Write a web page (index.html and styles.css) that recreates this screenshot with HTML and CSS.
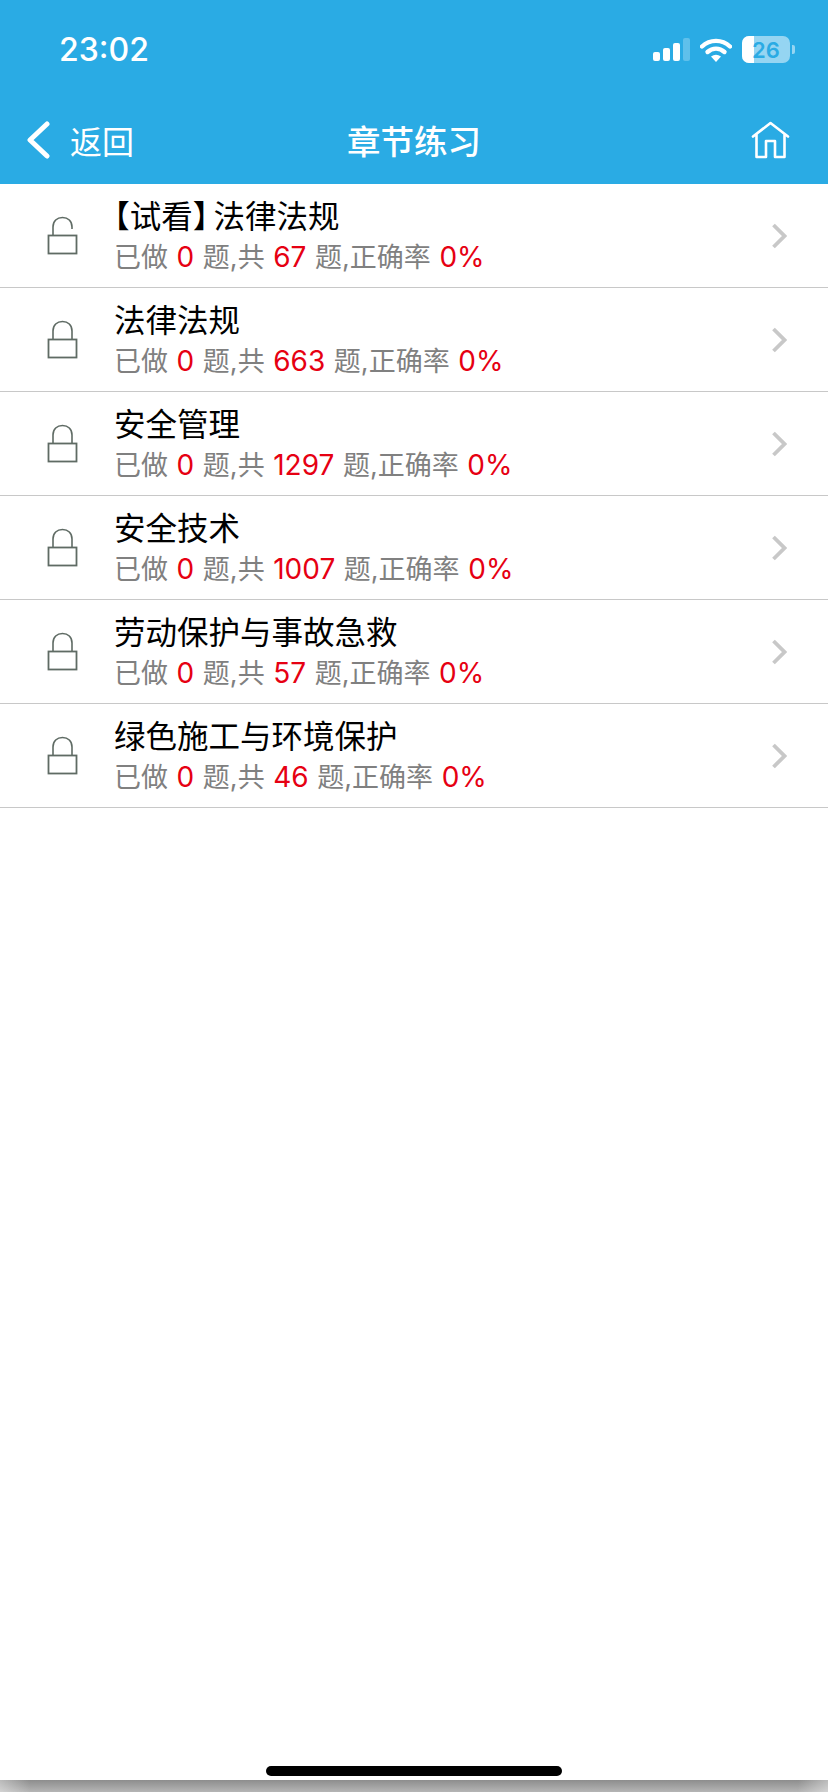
FILE: index.html
```html
<!DOCTYPE html>
<html lang="zh-CN">
<head>
<meta charset="utf-8">
<title>章节练习</title>
<link rel="stylesheet" href="styles.css">
</head>
<body>
<div class="screen">
  <header class="header">
    <div class="status">
      <span class="time">23:02</span>
      <div class="status-icons">
        <svg class="signal" width="37" height="23" viewBox="0 0 37 23"><rect x="0" y="14" width="7" height="9" rx="2" fill="#fff"/><rect x="10" y="10" width="7" height="13" rx="2" fill="#fff"/><rect x="20" y="5" width="7" height="18" rx="2" fill="#fff"/><rect x="30" y="0" width="7" height="23" rx="2" fill="#fff" opacity=".25"/></svg>
        <svg class="wifi" width="32" height="24" viewBox="0 0 32 24"><path d="M2 8.500C10 1 22 1 30 8.500" fill="none" stroke="#fff" stroke-width="4.400" stroke-linecap="round"/><path d="M7.500 14C12.500 9.500 19.500 9.500 24.500 14" fill="none" stroke="#fff" stroke-width="4.400" stroke-linecap="round"/><path d="M11 18.500Q16 15 21 18.500L16 24Z" fill="#fff"/></svg>
        <div class="battery"><div class="battery-body"><div class="battery-fill"></div><span class="battery-text">26</span></div><div class="battery-cap"></div></div>
      </div>
    </div>
    <nav class="nav">
      <div class="back">
        <svg width="24" height="38" viewBox="0 0 24 38"><path d="M21 3L4 19L21 35" fill="none" stroke="#fff" stroke-width="5" stroke-linecap="round" stroke-linejoin="round"/></svg>
        <span>返回</span>
      </div>
      <div class="title">章节练习</div>
      <svg class="home" width="40" height="38" viewBox="0 0 40 38"><path d="M2 15.500L19.500 2L37 15.500M5.500 13V36H15V20H24V36H33.500V13" fill="none" stroke="#fff" stroke-width="2.600" stroke-linecap="round" stroke-linejoin="round"/></svg>
    </nav>
  </header>
  <main class="list">
    <div class="row">
      <svg class="lock" width="32" height="40" viewBox="0 0 32 40"><path d="M6 19V11C6 5 10 1.500 15.500 1.500C21 1.500 25 5 25 11V13" fill="none" stroke="#5f6b64" stroke-width="1.600"/><rect x="1.500" y="19.500" width="28" height="18" fill="none" stroke="#5f6b64" stroke-width="1.800"/></svg>
      <div class="info">
        <div class="name"><span class="bracket">【</span>试看<span class="bracket bracket-close">】</span>法律法规</div>
        <div class="stats">已做 <em>0</em> 题,共 <em>67</em> 题,正确率 <em>0%</em></div>
      </div>
      <svg class="chev" width="16" height="26" viewBox="0 0 16 26"><path d="M2.500 2L13.500 13L2.500 24" fill="none" stroke="#c8c8c8" stroke-width="3.800"/></svg>
    </div>
    <div class="row">
      <svg class="lock" width="32" height="40" viewBox="0 0 32 40"><path d="M6 19V11C6 5 10 1.500 15.500 1.500C21 1.500 25 5 25 11V19" fill="none" stroke="#5f6b64" stroke-width="1.600"/><rect x="1.500" y="19.500" width="28" height="18" fill="none" stroke="#5f6b64" stroke-width="1.800"/></svg>
      <div class="info">
        <div class="name">法律法规</div>
        <div class="stats">已做 <em>0</em> 题,共 <em>663</em> 题,正确率 <em>0%</em></div>
      </div>
      <svg class="chev" width="16" height="26" viewBox="0 0 16 26"><path d="M2.500 2L13.500 13L2.500 24" fill="none" stroke="#c8c8c8" stroke-width="3.800"/></svg>
    </div>
    <div class="row">
      <svg class="lock" width="32" height="40" viewBox="0 0 32 40"><path d="M6 19V11C6 5 10 1.500 15.500 1.500C21 1.500 25 5 25 11V19" fill="none" stroke="#5f6b64" stroke-width="1.600"/><rect x="1.500" y="19.500" width="28" height="18" fill="none" stroke="#5f6b64" stroke-width="1.800"/></svg>
      <div class="info">
        <div class="name">安全管理</div>
        <div class="stats">已做 <em>0</em> 题,共 <em>1297</em> 题,正确率 <em>0%</em></div>
      </div>
      <svg class="chev" width="16" height="26" viewBox="0 0 16 26"><path d="M2.500 2L13.500 13L2.500 24" fill="none" stroke="#c8c8c8" stroke-width="3.800"/></svg>
    </div>
    <div class="row">
      <svg class="lock" width="32" height="40" viewBox="0 0 32 40"><path d="M6 19V11C6 5 10 1.500 15.500 1.500C21 1.500 25 5 25 11V19" fill="none" stroke="#5f6b64" stroke-width="1.600"/><rect x="1.500" y="19.500" width="28" height="18" fill="none" stroke="#5f6b64" stroke-width="1.800"/></svg>
      <div class="info">
        <div class="name">安全技术</div>
        <div class="stats">已做 <em>0</em> 题,共 <em>1007</em> 题,正确率 <em>0%</em></div>
      </div>
      <svg class="chev" width="16" height="26" viewBox="0 0 16 26"><path d="M2.500 2L13.500 13L2.500 24" fill="none" stroke="#c8c8c8" stroke-width="3.800"/></svg>
    </div>
    <div class="row">
      <svg class="lock" width="32" height="40" viewBox="0 0 32 40"><path d="M6 19V11C6 5 10 1.500 15.500 1.500C21 1.500 25 5 25 11V19" fill="none" stroke="#5f6b64" stroke-width="1.600"/><rect x="1.500" y="19.500" width="28" height="18" fill="none" stroke="#5f6b64" stroke-width="1.800"/></svg>
      <div class="info">
        <div class="name">劳动保护与事故急救</div>
        <div class="stats">已做 <em>0</em> 题,共 <em>57</em> 题,正确率 <em>0%</em></div>
      </div>
      <svg class="chev" width="16" height="26" viewBox="0 0 16 26"><path d="M2.500 2L13.500 13L2.500 24" fill="none" stroke="#c8c8c8" stroke-width="3.800"/></svg>
    </div>
    <div class="row">
      <svg class="lock" width="32" height="40" viewBox="0 0 32 40"><path d="M6 19V11C6 5 10 1.500 15.500 1.500C21 1.500 25 5 25 11V19" fill="none" stroke="#5f6b64" stroke-width="1.600"/><rect x="1.500" y="19.500" width="28" height="18" fill="none" stroke="#5f6b64" stroke-width="1.800"/></svg>
      <div class="info">
        <div class="name">绿色施工与环境保护</div>
        <div class="stats">已做 <em>0</em> 题,共 <em>46</em> 题,正确率 <em>0%</em></div>
      </div>
      <svg class="chev" width="16" height="26" viewBox="0 0 16 26"><path d="M2.500 2L13.500 13L2.500 24" fill="none" stroke="#c8c8c8" stroke-width="3.800"/></svg>
    </div>
  </main>
  <div class="home-area"><div class="home-bar"></div></div>
  <div class="bottom-shadow"></div>
</div>
</body>
</html>
```
FILE: styles.css
```css
* { box-sizing: border-box; }
html, body { margin: 0; padding: 0; background: #fff; }
body { font-family: "Inter", "Noto Sans CJK SC", sans-serif; }
.screen { width: 828px; height: 1792px; display: flex; flex-direction: column; overflow: hidden; }
.header { height: 184px; flex: none; background: #2aabe4; color: #fff; display: flex; flex-direction: column; }
.status { height: 96px; display: flex; align-items: center; justify-content: space-between; padding: 3px 33px 0 59px; }
.time { font-size: 32px; font-weight: 500; line-height: 1; }
.status-icons { display: flex; align-items: center; gap: 10px; }
.battery { display: flex; align-items: center; gap: 2px; }
.battery-body { position: relative; width: 48px; height: 27px; border-radius: 7px; background: rgba(255,255,255,.5); overflow: hidden; display: flex; align-items: center; justify-content: center; }
.battery-fill { position: absolute; left: 0; top: 0; bottom: 0; width: 12px; background: #fff; }
.battery-text { position: relative; font-size: 22px; font-weight: 600; color: #2aabe4; line-height: 1; }
.battery-cap { width: 3px; height: 9px; border-radius: 0 2px 2px 0; background: rgba(255,255,255,.5); }
.nav { flex: 1; position: relative; display: flex; align-items: center; justify-content: space-between; padding: 0 37px 0 26px; }
.back { display: flex; align-items: center; gap: 20px; font-size: 32px; font-weight: 400; font-family: "Noto Sans CJK SC", sans-serif; line-height: 1; }
.title { position: absolute; left: 0; right: 0; top: 0; bottom: 0; display: flex; align-items: center; justify-content: center; font-size: 33.5px; font-family: "Noto Sans CJK SC", sans-serif; font-weight: 500; line-height: 46px; pointer-events: none; }
.list { flex: none; }
.row { height: 104px; border-bottom: 1px solid #c8c8c8; display: flex; align-items: center; padding: 0 41px 0 47px; }
.lock { flex: none; margin-right: 35px; }
.info { flex: 1; min-width: 0; display: flex; flex-direction: column; gap: 7px; margin-bottom: 2px; }
.name { font-size: 31.5px; line-height: 38px; color: #000; font-family: "Noto Sans CJK SC", sans-serif; }
.bracket { font-feature-settings: "halt"; }
.bracket-close { margin-right: 5px; }
.stats { font-size: 27px; line-height: 34px; color: #808080; word-spacing: 1px; }
.stats em { font-style: normal; font-size: 28px; color: #e60012; }
.chev { flex: none; }
.home-area { flex: 1; display: flex; align-items: flex-end; justify-content: center; padding-bottom: 4px; }
.home-bar { width: 296px; height: 10px; border-radius: 5px; background: #000; }
.bottom-shadow { flex: none; height: 12px; background: linear-gradient(90deg, rgba(255,255,255,.4), rgba(255,255,255,0) 30px, rgba(255,255,255,0) calc(100% - 30px), rgba(255,255,255,.4)), linear-gradient(#8d8d8d, #b5b5b5); }
```
